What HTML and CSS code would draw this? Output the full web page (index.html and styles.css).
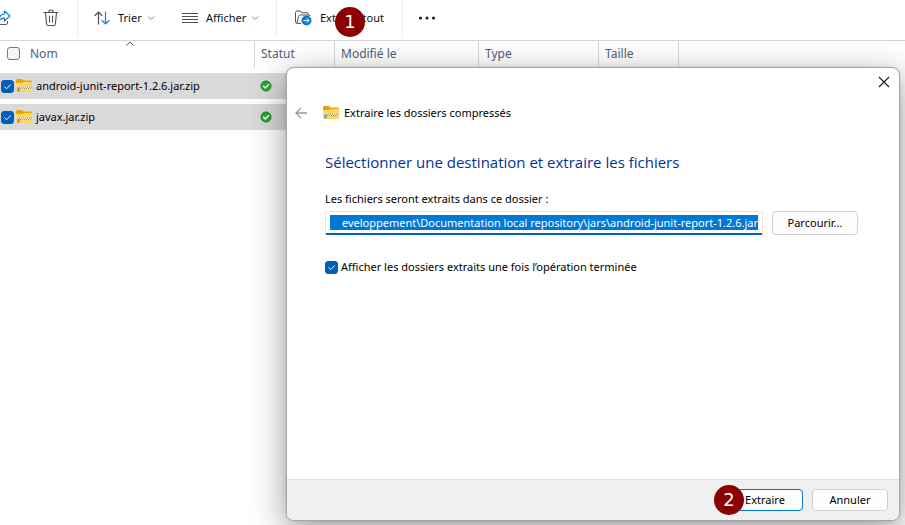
FILE: index.html
```html
<!DOCTYPE html>
<html lang="fr">
<head>
    <meta charset="UTF-8">
    <meta name="viewport" content="width=device-width, initial-scale=1.0">
    <title>Extraire les dossiers compressés</title>
    <link rel="stylesheet" href="styles.css">
</head>
<body>
    <svg class="defs" aria-hidden="true">
        <symbol id="zip" viewBox="0 0 16 14">
            <path fill="#e5a50a" d="M0 1.500Q0 0 1.500 0H6L7.500 1.500H14.500Q16 1.500 16 3V5H0Z"/>
            <path fill="#ffd75e" d="M0 4H6L8 3H15Q16 3 16 4V12Q16 13 15 13H1Q0 13 0 12Z"/>
            <path stroke="#f3edd5" stroke-width="3" d="M1 8.500H16"/>
            <path stroke="#777" stroke-width="1" stroke-dasharray="1 1" d="M3 8H16"/>
            <path stroke="#9a8f6c" stroke-width="1" stroke-dasharray="1 1" d="M4 9.500H16"/>
            <rect x="1" y="8" width="3" height="5" rx="1" fill="#a9b3bd"/>
            <path stroke="#7b858f" d="M2.500 9.500V12"/>
        </symbol>
        <symbol id="check" viewBox="0 0 12 12">
            <circle cx="6" cy="6" r="5" fill="#2fa82f" stroke="#16851b"/>
            <path fill="none" stroke="#fff" stroke-width="1.500" d="M3.200 6L5.200 8L8.900 4.200"/>
        </symbol>
        <symbol id="chevron" viewBox="0 0 8 8">
            <path fill="none" stroke="#8a8a8a" d="M1 2.500L4 5.500L7 2.500"/>
        </symbol>
    </svg>

    <div class="toolbar">
        <button class="tool tool--share" aria-label="Partager">
            <svg width="18" height="18" viewBox="0 0 18 18" fill="none">
                <path stroke="#5a5a5a" d="M6 3.500H4Q2.500 3.500 2.500 5V14Q2.500 15.500 4 15.500H13Q14.500 15.500 14.500 14V12"/>
                <path stroke="#1a7fd4" stroke-linejoin="round" stroke-width="1.200" d="M11.500 2L17 7L11.500 12V9.200Q8 9 5.500 12Q6 5.500 11.500 5Z"/>
            </svg>
        </button>
        <button class="tool tool--delete" aria-label="Supprimer">
            <svg width="16" height="18" viewBox="0 0 16 18" fill="none" stroke="#505050" stroke-width="1.100" stroke-linecap="round">
                <path d="M1 3.500H15M5.800 3.300Q5.800 1 8 1Q10.200 1 10.200 3.300M2.500 3.500L3.600 15Q3.800 16.500 5 16.500H11Q12.200 16.500 12.400 15L13.500 3.500M6.500 7V13M9.500 7V13"/>
            </svg>
        </button>
        <button class="tool tool--sort">
            <svg width="16" height="14" viewBox="0 0 16 14" fill="none" stroke-width="1.200" stroke-linecap="round">
                <path stroke="#505050" d="M4.500 13V1M1 4.500L4.500 1L8 4.500"/>
                <path stroke="#1a7fd4" d="M11.500 1V13M8 9.500L11.500 13L15 9.500"/>
            </svg>
            <span>Trier</span>
            <svg class="chevron" width="8" height="8"><use href="#chevron"/></svg>
        </button>
        <button class="tool tool--view">
            <svg width="16" height="12" viewBox="0 0 16 12" stroke="#505050">
                <path d="M0 1.500H16M0 4.500H16M0 7.500H16M0 10.500H16"/>
            </svg>
            <span>Afficher</span>
            <svg class="chevron" width="8" height="8"><use href="#chevron"/></svg>
        </button>
        <button class="tool tool--extract">
            <svg width="17" height="16" viewBox="0 0 17 16" fill="none">
                <path stroke="#505050" stroke-linejoin="round" d="M6 13.500H2.500Q.5 13.500 .5 11.500V2.500Q.5 1 2 1H5L7 2.800H12Q13.500 2.800 13.500 4.500M2 13L3.500 6.500Q4 5 5.500 5H14Q15.500 5 15 6"/>
                <circle cx="11.500" cy="10.500" r="5" fill="#0a7bd0"/>
                <path stroke="#fff" d="M8.500 10.500H14M11.800 8.200L14.100 10.500L11.800 12.800"/>
            </svg>
            <span>Extraire tout</span>
            <span class="step step--first">1</span>
        </button>
        <button class="tool tool--more" aria-label="Plus">
            <svg width="18" height="4" viewBox="0 0 18 4" fill="#222">
                <circle cx="2.500" cy="2" r="1.600"/><circle cx="9" cy="2" r="1.600"/><circle cx="15.500" cy="2" r="1.600"/>
            </svg>
        </button>
    </div>

    <table class="files">
        <thead>
            <tr>
                <th class="col-name">
                    <label class="name"><input type="checkbox" class="box"> <span>Nom</span></label>
                    <svg class="sorted" width="8" height="5" viewBox="0 0 8 5" fill="none" stroke="#555"><path d="M.5 4.500L4 1L7.500 4.500"/></svg>
                </th>
                <th class="col-status">Statut</th>
                <th class="col-date">Modifié le</th>
                <th class="col-type">Type</th>
                <th class="col-size">Taille</th>
            </tr>
        </thead>
        <tbody>
            <tr>
                <td><label class="file"><input type="checkbox" class="box" checked><svg width="16" height="14"><use href="#zip"/></svg><span>android-junit-report-1.2.6.jar.zip</span></label></td>
                <td class="status"><svg width="12" height="12"><use href="#check"/></svg></td>
                <td></td><td></td><td></td>
            </tr>
            <tr>
                <td><label class="file"><input type="checkbox" class="box" checked><svg width="16" height="14"><use href="#zip"/></svg><span>javax.jar.zip</span></label></td>
                <td class="status"><svg width="12" height="12"><use href="#check"/></svg></td>
                <td></td><td></td><td></td>
            </tr>
        </tbody>
    </table>

    <div class="dialog" role="dialog" aria-labelledby="dialog-title">
        <div class="dialog-top">
            <button class="icon-button" aria-label="Fermer">
                <svg width="12" height="12" viewBox="0 0 12 12" stroke="#222" stroke-width="1.200"><path d="M1 1L11 11M11 1L1 11"/></svg>
            </button>
        </div>
        <div class="dialog-title">
            <button class="icon-button" aria-label="Précédent">
                <svg width="12" height="12" viewBox="0 0 12 12" fill="none" stroke="#999" stroke-width="1.300"><path d="M12 6H1M6 1L1 6L6 11"/></svg>
            </button>
            <svg class="title-icon" width="16" height="14"><use href="#zip"/></svg>
            <span id="dialog-title">Extraire les dossiers compressés</span>
        </div>
        <div class="dialog-body">
            <h1>Sélectionner une destination et extraire les fichiers</h1>
            <label for="folder">Les fichiers seront extraits dans ce dossier :</label>
            <div class="folder-row">
                <input type="text" id="folder" class="folder" value="eveloppement\Documentation local repository\jars\android-junit-report-1.2.6.jar">
                <button class="btn">Parcourir...</button>
            </div>
            <label class="show"><input type="checkbox" class="box" checked> <span>Afficher les dossiers extraits une fois l’opération terminée</span></label>
        </div>
        <div class="dialog-footer">
            <button class="btn btn--primary">Extraire<span class="step step--second">2</span></button>
            <button class="btn">Annuler</button>
        </div>
    </div>
</body>
</html>
```

FILE: styles.css
```css
:root {
    --blue: #005fb8;
    --line: #d5d5d5;
}

* { box-sizing: border-box; }

body {
    position: relative;
    min-height: 100vh;
    margin: 0;
    overflow: hidden;
    background: #fff;
    color: #000;
    font: 11px/16px "Noto Sans", "Open Sans", sans-serif;
}

svg { display: block; flex: none; }
.defs { position: absolute; width: 0; height: 0; }

button {
    border: 0;
    background: none;
    color: inherit;
    font: inherit;
    padding: 0;
}

/* Barre d'outils */
.toolbar {
    display: flex;
    align-items: center;
    height: 41px;
    padding-bottom: 4px;
    border-bottom: 1px solid var(--line);
}
.tool {
    position: relative;
    display: flex;
    align-items: center;
    gap: 8px;
    height: 36px;
    white-space: nowrap;
    color: #111;
}
.tool--share { width: 11px; justify-content: flex-end; }
.tool--delete { width: 67px; padding-left: 32px; border-right: 1px solid #ececec; }
.tool--sort { width: 88px; padding-left: 16px; }
.tool--view { width: 111px; padding-left: 16px; border-right: 1px solid #ececec; }
.tool--extract { width: 126px; padding-left: 18px; border-right: 1px solid #ececec; }
.tool--more { padding-left: 15px; }
.chevron { margin-left: -3px; }

/* Pastilles numérotées */
.step {
    position: absolute;
    width: 30px;
    height: 30px;
    border-radius: 50%;
    background: #8b0000;
    color: #fff;
    font: 18px/30px "DejaVu Sans", sans-serif;
    text-align: center;
}
.step--first { left: 58px; top: 7px; }
.step--second { left: -14px; top: -5px; }

/* Liste des fichiers */
.files {
    width: 679px;
    table-layout: fixed;
    border-spacing: 0;
}
.files th {
    position: relative;
    height: 27px;
    padding: 0 6px 2px;
    border-right: 1px solid var(--line);
    color: #4c607a;
    font-size: 12px;
    font-weight: normal;
    text-align: left;
}
.col-name { width: 255px; }
.col-status { width: 80px; }
.col-date { width: 144px; }
.col-type { width: 120px; }
.col-size { width: 80px; }
.sorted { position: absolute; left: 126px; top: 0; }
.name { display: flex; align-items: center; gap: 10px; padding-left: 1px; }
.files td {
    height: 31px;
    padding: 0;
    border-top: 5px solid transparent;
    background: #d9d9d9;
    background-clip: padding-box;
}
.file { display: flex; align-items: center; gap: 4px; padding-left: 1px; }
.file .box { margin-right: -2px; }
.files .status { padding-left: 5px; }

.box {
    appearance: none;
    flex: none;
    width: 13px;
    height: 13px;
    margin: 0;
    border: 1px solid #777;
    border-radius: 3px;
    background: #f6f6f6;
}
.box:checked {
    border-color: var(--blue);
    background: var(--blue) url("data:image/svg+xml,%3Csvg xmlns='http://www.w3.org/2000/svg' viewBox='0 0 11 11'%3E%3Cpath d='M2.500 5.500L4.700 7.700L8.700 3.500' fill='none' stroke='white'/%3E%3C/svg%3E") center / 11px no-repeat;
}

/* Boîte de dialogue */
.dialog {
    position: absolute;
    inset: 67px 5px 4px 286px;
    display: flex;
    flex-direction: column;
    overflow: hidden;
    border: 1px solid #a6a6a6;
    border-radius: 8px;
    background: #fff;
    box-shadow: 0 10px 36px rgba(0, 0, 0, 0.4), 0 0 4px rgba(0, 0, 0, 0.12);
}
.dialog-top {
    display: flex;
    justify-content: flex-end;
    padding: 8px 9px 0;
}
.icon-button {
    width: 12px;
    height: 12px;
}
.dialog-title {
    display: flex;
    align-items: center;
    padding: 17px 8px 0;
}
.title-icon { margin: 0 5px 0 16px; }
.dialog-body {
    display: flex;
    flex: 1;
    flex-direction: column;
    align-items: flex-start;
    padding: 29px 41px 0 38px;
}
.dialog-body h1 {
    margin: 0 0 17px;
    color: #003399;
    font-family: "Open Sans", "Noto Sans", sans-serif;
    font-size: 15px;
    font-weight: normal;
    line-height: 24px;
}
.folder-row {
    display: flex;
    gap: 9px;
    width: 100%;
    margin: 4px 0 24px;
}
.folder {
    flex: 1;
    min-width: 0;
    height: 24px;
    padding: 3px 4px;
    border: 1px solid #e5e5e5;
    border-bottom: 2px solid var(--blue);
    border-radius: 2px;
    outline: 0;
    background: #0078d4 content-box;
    color: #fff;
    font: inherit;
    text-align: right;
}
.show { display: flex; align-items: center; gap: 3px; }

.btn {
    position: relative;
    width: 76px;
    height: 22px;
    border: 1px solid #cfcfcf;
    border-radius: 4px;
    background: #fdfdfd;
}
.folder-row .btn { width: 86px; height: 24px; }
.btn--primary { border-color: #0078d4; }

.dialog-footer {
    display: flex;
    justify-content: flex-end;
    gap: 9px;
    padding: 9px 11px;
    border-top: 1px solid #dfdfdf;
    background: #f0f0f0;
}
```
